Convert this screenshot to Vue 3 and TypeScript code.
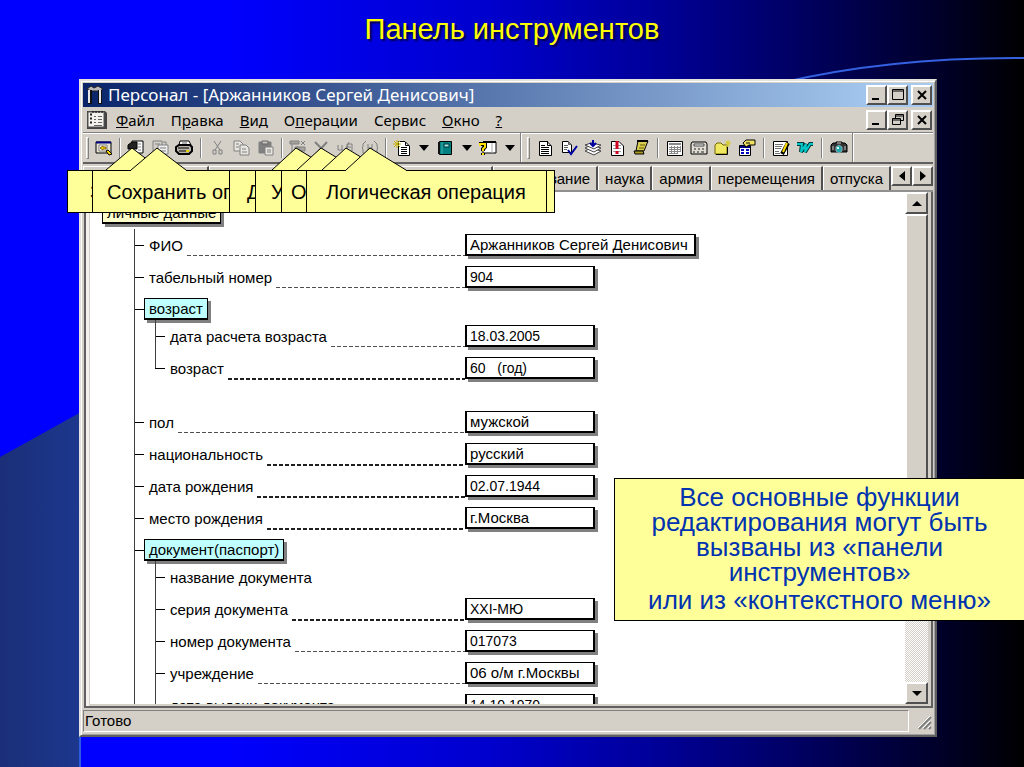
<script setup lang="ts">
import { ref } from 'vue'

interface Shape { d: string; f?: string; s?: string; w?: number }
interface Tool { icon?: string; kind?: 'sep' | 'wide' | 'drop' | 'grip'; label?: string }
interface Row { kind: 'field' | 'tag' | 'gap'; level?: number; label?: string; value?: string; bold?: boolean; long?: boolean; num?: boolean; last?: boolean; bare?: boolean }

const icons: Record<string, Shape[]> = {
  card: [
    { d: 'M1 3H16V14H1Z', f: '#e8e4d0', s: '#000' }, { d: 'M1 3.5H16', s: '#000080', w: 2 },
    { d: 'M4 6H12V12H4Z', f: '#fff', s: '#808080' }, { d: 'M5 9L8 7V8H11V10H8V11Z', f: '#ffe000', s: '#806000' },
    { d: 'M11 12L13 11L17 15L14 16Z', f: '#ffe000', s: '#000' },
  ],
  save: [
    { d: 'M5 2H16V14H5Z', f: '#fff', s: '#000' }, { d: 'M1 6L5 3H10V10H1Z', f: '#222', s: '#000' },
    { d: 'M10 5H14M10 8H14M11 11H14', s: '#808080' },
  ],
  saveDim: [
    { d: 'M2 2H11V12H2Z', f: '#d4d0c8', s: '#808080' }, { d: 'M7 6H17V15H7Z', f: '#eee', s: '#808080' },
    { d: 'M4 5H9M9 9H15M9 12H15M12 3L15 3L15 6', s: '#808080' },
  ],
  print: [
    { d: 'M5 2H14L16 6H4Z', f: '#fff', s: '#000' }, { d: 'M1 8L4 6H15L17 8V12L14 15H4L1 12Z', f: '#b8b4ac', s: '#000', w: 2 },
    { d: 'M3 9H14M4 12H12', s: '#000' }, { d: 'M11 12H14', s: '#e0d000', w: 2 }, { d: 'M7 4H12', s: '#666' },
  ],
  cut: [
    { d: 'M5 2L11 11M12 2L6 11', s: '#808080' },
    { d: 'M4 11H7V15H4ZM10 11H13V15H10Z', s: '#808080' },
  ],
  copy: [
    { d: 'M1 2H7L10 5V12H1Z', f: '#e8e6e0', s: '#808080' }, { d: 'M7 6H13L16 9V16H7Z', f: '#e8e6e0', s: '#808080' },
    { d: 'M3 5H6M3 8H6M9 10H13M9 13H14', s: '#808080' },
  ],
  paste: [
    { d: 'M2 3H14V14H2Z', f: '#808080', s: '#808080' }, { d: 'M5 2H11V5H5Z', f: '#c8c4bc', s: '#666' },
    { d: 'M8 8H16V16H8Z', f: '#e8e6e0', s: '#808080' }, { d: 'M10 11H14M10 13H14', s: '#808080' },
  ],
  addDim: [
    { d: 'M1 2H10V5H1ZM6 8H16V12H6Z', f: '#a8a49c', s: '#808080' }, { d: 'M3 5V14H9M12 2L16 6M16 2L12 6M8 7L13 13', s: '#808080' },
  ],
  delDim: [{ d: 'M2 3L14 15M14 3L3 15', s: '#808080', w: 2 }],
  editDim: [
    { d: 'M1 6V11H5V6M5 11H6M10 12V5H15V12M10 8H14M7 15L12 3', s: '#808080' },
  ],
  logicDim: [
    { d: 'M5 2L2 5V8L1 9L2 10V14L5 16M13 2L16 5V8L17 9L16 10V14L13 16M7 5V13M11 5V13M7 9H11', s: '#808080' },
  ],
  newdoc: [
    { d: 'M5.5 2.5H12L16.5 7V16.5H5.5Z', f: '#fff', s: '#000' }, { d: 'M12.5 3V6.5H16M8 8.5H14M8 10.5H14M8 12.5H14M8 14.5H14', s: '#000' },
    { d: 'M4 1V9M0 5H8M1 2L7 8M7 2L1 8', s: '#c8b400' },
  ],
  book: [{ d: 'M3.5 2.5H15.5V15.5H3.5Z', f: '#008080', s: '#000' }, { d: 'M3 3V15', s: '#111', w: 2 }, { d: 'M6 3V15', s: '#40b0b0' }, { d: 'M8 5H13V8H8Z', f: '#9fe0e0', s: '#003838' }],
  help: [
    { d: 'M4 3H17V14H4Z', f: '#fff', s: '#000' }, { d: 'M4 3H17', s: '#000', w: 2 }, { d: 'M13 4V14', s: '#aaa' },
    { d: 'M1 7V5H6V8L4 10V12M4 14V16', s: '#000', w: 4 }, { d: 'M1 7V5H6V8L4 10V12M4 14V16', s: '#ffe000', w: 2 },
  ],
  doc: [
    { d: 'M3.5 2.5H11L15.5 7V16.5H3.5Z', f: '#fff', s: '#000' }, { d: 'M11.5 2V6.5H15M5 6.5H9M5 8.5H13M5 10.5H13M5 12.5H13M5 14.5H13', s: '#000' },
  ],
  check: [
    { d: 'M2.5 2.5H8L11.5 6V13.5H2.5Z', f: '#fff', s: '#000' }, { d: 'M8.5 2V5.5H11M4 6.5H8M4 8.5H8M4 10.5H7', s: '#606060' },
    { d: 'M8 11L11 15L17 7', s: '#0000a0', w: 2 },
  ],
  stack: [
    { d: 'M1 12L7 9L17 12L10 16Z', f: '#fff', s: '#444' }, { d: 'M1 9L7 6L17 9L10 13Z', f: '#fff', s: '#444' },
    { d: 'M1 6L7 4L17 6L10 10Z', f: '#fff', s: '#444' }, { d: 'M9 1V6M6 4L9 7L12 4', s: '#0000a0', w: 2 },
  ],
  alert: [
    { d: 'M3.5 2.5H11L15.5 7V16.5H3.5Z', f: '#fff', s: '#000' }, { d: 'M5 6.5H13M5 9.5H13M5 12.5H13', s: '#999' },
    { d: 'M9 2V10M9 12V15', s: '#d00020', w: 3 },
  ],
  scroll: [
    { d: 'M6 2H16L12 12H4Z', f: '#d8cc50', s: '#000' }, { d: 'M2 12H11L12 15H3Z', f: '#a89820', s: '#000' },
    { d: 'M8 6H13M7 9H12', s: '#605800' }, { d: 'M5 2H16', s: '#000', w: 2 },
  ],
  grid: [
    { d: 'M1.5 2.5H16.5V16.5H1.5Z', f: '#fff', s: '#000' }, { d: 'M3 4H15V6H3Z', f: '#888' },
    { d: 'M3 8.5H15M3 10.5H15M3 12.5H15M3 14.5H12M5.5 7V15M8.5 7V15M11.5 7V15M14.5 7V13', s: '#888' },
  ],
  calc: [
    { d: 'M2 3H16L17 5V15H1V5Z', f: '#e0dcd4', s: '#000' }, { d: 'M4 5H14V7H4Z', f: '#fff', s: '#444' },
    { d: 'M4 10H6M8 10H10M12 10H14M3 13H5M7 13H9M11 13H14', s: '#222' },
  ],
  folder: [
    { d: 'M1 6L3 4H7L9 6H13V15H1Z', f: '#f0e860', s: '#706800' }, { d: 'M2 15.5H13.5V8', s: '#000' },
    { d: 'M14 1V8M11 4H17M12 2L16 7M16 2L12 7', s: '#d8cc20' },
  ],
  props: [
    { d: 'M1.5 6.5H12.5V16.5H1.5Z', f: '#fff', s: '#000' }, { d: 'M2 8H12', s: '#000080', w: 2 }, { d: 'M3 11H6M8 11H11M3 14H6M8 14H11', s: '#0000c0', w: 2 },
    { d: 'M5 4L8 1H17V6H11L8 8Z', f: '#f0e060', s: '#000' }, { d: 'M8 4H12', s: '#000' },
  ],
  note: [
    { d: 'M1.5 2.5H15.5V16.5H1.5Z', f: '#fff', s: '#000' }, { d: 'M3 5.5H11M3 7.5H10M3 9.5H9M3 12.5H7M3 14.5H8', s: '#707070' },
    { d: 'M16 4L10 15', s: '#000', w: 4 }, { d: 'M15 4L11 13', s: '#ffe000', w: 2 },
  ],
  word: [
    { d: 'M1 5H6L5 13L10 5L9 13L14 5H17', s: '#003838', w: 4 }, { d: 'M1 5H6L5 13L10 5L9 13L14 5H17', s: '#00c8c8', w: 2 },
  ],
  camera: [
    { d: 'M1 6L3 4H6V3H12V4H15L17 6V13H1Z', f: '#333', s: '#000' }, { d: 'M3 7V11M15 7V11M7 4H11', s: '#ccc' },
    { d: 'M9 6L12 8V12L9 14L6 12V8Z', f: '#20a8a8', s: '#8ab' }, { d: 'M7 9H9', s: '#d0ffff', w: 2 },
  ],
}

const t = (icon: string, label: string): Tool => ({ icon, label })
const sep: Tool = { kind: 'sep' }
const wide: Tool = { kind: 'wide' }
const drop: Tool = { kind: 'drop', label: 'Список' }
const tools: Tool[] = [
  { kind: 'grip' }, t('card', 'Карточка'), sep, t('save', 'Сохранить'), t('saveDim', 'Сохранить операцию'), t('print', 'Печать'), wide,
  t('cut', 'Вырезать'), t('copy', 'Копировать'), t('paste', 'Вставить'), sep,
  t('addDim', 'Добавить'), t('delDim', 'Удалить'), t('editDim', 'Операция'), t('logicDim', 'Логическая операция'), sep,
  t('newdoc', 'Новый документ'), drop, t('book', 'Справочник'), drop, t('help', 'Справка'), drop,
]
const tools2: Tool[] = [
  { kind: 'grip' }, t('doc', 'Документ'), t('check', 'Проверка'), t('stack', 'Загрузка'), t('alert', 'Внимание'), t('scroll', 'Приказ'), wide,
  t('grid', 'Таблица'), t('calc', 'Калькулятор'), t('folder', 'Папка'), t('props', 'Свойства'), wide,
  t('note', 'Заметка'), t('word', 'Word'), wide, t('camera', 'Снимок'),
]

const menu: [string, string, string][] = [['', 'Ф', 'айл'], ['П', 'р', 'авка'], ['', 'В', 'ид'], ['О', 'п', 'ерации'], ['Сервис', '', ''], ['', 'О', 'кно'], ['', '?', '']]
const tabs = ['образование', 'наука', 'армия', 'перемещения', 'отпуска']

const rows = ref<Row[]>([
  { kind: 'field', label: 'ФИО', value: 'Аржанников Сергей Денисович', long: true },
  { kind: 'field', label: 'табельный номер', value: '904', num: true },
  { kind: 'tag', label: 'возраст' },
  { kind: 'field', level: 1, label: 'дата расчета возраста', value: '18.03.2005', num: true },
  { kind: 'field', level: 1, label: 'возраст', value: '60   (год)', num: true, bold: true, last: true },
  { kind: 'gap' },
  { kind: 'field', label: 'пол', value: 'мужской' },
  { kind: 'field', label: 'национальность', value: 'русский', bold: true },
  { kind: 'field', label: 'дата рождения', value: '02.07.1944', num: true, bold: true },
  { kind: 'field', label: 'место рождения', value: 'г.Москва', bold: true },
  { kind: 'tag', label: 'документ(паспорт)' },
  { kind: 'field', level: 1, label: 'название документа', bare: true },
  { kind: 'field', level: 1, label: 'серия документа', value: 'XXI-МЮ', num: true, bold: true },
  { kind: 'field', level: 1, label: 'номер документа', value: '017073', num: true },
  { kind: 'field', level: 1, label: 'учреждение', value: '06 о/м г.Москвы' },
  { kind: 'field', level: 1, label: 'дата выдачи документа', value: '14.10.1970', num: true },
])

const callouts = [
  { id: 'c1', text: 'З', wing: 'left' },
  { id: 'c2', text: 'Сохранить оп', wing: 'left' },
  { id: 'c3', text: 'Д', wing: 'right' },
  { id: 'c4', text: 'У', wing: 'right' },
  { id: 'c5', text: 'О', wing: 'right' },
  { id: 'c6', text: 'Логическая операция', wing: 'right' },
]
</script>

<template>
  <main class="stage">
    <svg class="backdrop" viewBox="0 0 1024 767" preserveAspectRatio="none" aria-hidden="true">
      <defs>
        <linearGradient id="disc" gradientUnits="userSpaceOnUse" x1="0" y1="0" x2="90" y2="0">
          <stop offset="0" stop-color="#1b2f78" /><stop offset="1" stop-color="#1c3890" />
        </linearGradient>
      </defs>
      <path d="M0 457Q40 435 90 407V640Q80 700 80 767H0Z" fill="url(#disc)" />
      <path d="M80 737V767" stroke="#2a5ce0" stroke-width="2" />
      <path d="M780 83Q890 57 1024 58" fill="none" stroke="#3560e0" stroke-width="2" />
    </svg>

    <h1 class="heading">Панель инструментов</h1>

    <section class="window">
      <header class="titlebar">
        <svg width="18" height="20" viewBox="0 0 18 20" aria-hidden="true">
          <path d="M1 4L5 1L8 3L12 1L17 4L14 6H5Z" fill="#bbb" stroke="#222" />
          <path d="M4 5V19M14 5V19" stroke="#111" stroke-width="4" />
          <path d="M3 5V18M14 5V18" stroke="#e8e8e8" stroke-width="2" />
        </svg>
        <span class="caption">Персонал - [Аржанников Сергей Денисович]</span>
        <span class="sysgroup">
          <button class="sys" aria-label="Свернуть"><svg width="12" height="12"><path d="M1 10H8" stroke="#000" stroke-width="2" /></svg></button>
          <button class="sys" aria-label="Развернуть"><svg width="12" height="12"><path d="M.5 .5H11.5V10.5H.5ZM1 2H11" fill="none" stroke="#000" /></svg></button>
          <button class="sys close" aria-label="Закрыть"><svg width="12" height="12"><path d="M2 2L10 10M10 2L2 10" stroke="#000" stroke-width="2" /></svg></button>
        </span>
      </header>

      <nav class="menubar">
        <svg width="22" height="20" viewBox="0 0 22 20" aria-hidden="true">
          <path d="M1 1H19L21 3V19H1Z" fill="#444" />
          <path d="M2 2H18V17H2Z" fill="#f4f2ec" stroke="#555" />
          <path d="M4 4.5H6M4 8.5H6M4 12.5H6" stroke="#222" stroke-width="2" />
          <path d="M8 6.5H10M12 6.5H16M8 9.5H10M12 9.5H16M8 12.5H10M12 12.5H16M8 15.5H16" stroke="#666" />
          <path d="M7 1V3M10 1V3M13 1V3M16 1V3" stroke="#000" />
        </svg>
        <button v-for="m in menu" :key="m.join('')" class="menuitem">{{ m[0] }}<u>{{ m[1] }}</u>{{ m[2] }}</button>
        <span class="sysgroup">
          <button class="sys" aria-label="Свернуть документ"><svg width="12" height="12"><path d="M1 10H8" stroke="#000" stroke-width="2" /></svg></button>
          <button class="sys" aria-label="Восстановить"><svg width="12" height="12"><path d="M3.5 .5H11.5V6.5H3.5ZM4 2H11" fill="none" stroke="#000" /><path d="M.5 4.5H8.5V10.5H.5ZM1 6H8" fill="#d4d0c8" stroke="#000" /></svg></button>
          <button class="sys close" aria-label="Закрыть документ"><svg width="12" height="12"><path d="M2 2L10 10M10 2L2 10" stroke="#000" stroke-width="2" /></svg></button>
        </span>
      </nav>

      <div class="toolbars">
        <div v-for="(bar, b) in [tools, tools2]" :key="b" class="toolbar" role="toolbar">
          <template v-for="(x, i) in bar" :key="i">
            <button v-if="x.icon" class="tool" :aria-label="x.label">
              <svg width="18" height="18" viewBox="0 0 18 18"><path v-for="(p, k) in icons[x.icon]" :key="k" :d="p.d" :fill="p.f ?? 'none'" :stroke="p.s ?? 'none'" :stroke-width="p.w ?? 1" /></svg>
            </button>
            <button v-else-if="x.kind === 'drop'" class="drop" :aria-label="x.label"><svg width="10" height="6"><path d="M0 0H10L5 6Z" /></svg></button>
            <span v-else :class="x.kind"></span>
          </template>
        </div>
      </div>

      <div class="tabstrip">
        <span class="blank short"></span><span class="blank"></span>
        <button v-for="tab in tabs" :key="tab" class="tab">{{ tab }}</button>
        <span class="tabnav">
          <button class="arrow" aria-label="Назад"><svg width="6" height="10"><path d="M6 0V10L0 5Z" /></svg></button>
          <button class="arrow" aria-label="Вперёд"><svg width="6" height="10"><path d="M0 0V10L6 5Z" /></svg></button>
        </span>
      </div>

      <div class="client">
        <div class="page">
          <div class="roottag"><span class="box cream">личные данные</span></div>
          <div class="tree">
            <template v-for="(r, i) in rows" :key="i">
              <div v-if="r.kind === 'gap'" class="gap"></div>
              <div v-else-if="r.kind === 'tag'" class="tagrow"><span class="tick"></span><span class="box cyan">{{ r.label }}</span></div>
              <div v-else class="row" :class="{ sub: r.level, last: r.last }">
                <span class="tick"></span>
                <label :for="'f' + i">{{ r.label }}</label>
                <span v-if="!r.bare" class="dots" :class="{ bold: r.bold }"></span>
                <input v-if="!r.bare" :id="'f' + i" v-model="r.value" type="text" :class="{ long: r.long, num: r.num }" />
              </div>
            </template>
          </div>
        </div>
        <div class="scroll">
          <button class="arrow" aria-label="Вверх"><svg width="10" height="5"><path d="M5 0L10 5H0Z" /></svg></button>
          <div class="thumb"></div>
          <div class="track"></div>
          <button class="arrow" aria-label="Вниз"><svg width="10" height="5"><path d="M0 0H10L5 5Z" /></svg></button>
        </div>
      </div>

      <footer class="status">
        <span class="panel">Готово</span>
        <svg width="16" height="20" viewBox="0 0 16 20" aria-hidden="true">
          <path d="M2 18L14 6M7 18L14 11M12 18L14 16" stroke="#808080" stroke-width="2" />
          <path d="M1 17L13 5M6 17L13 10M11 17L13 15" stroke="#fff" />
        </svg>
      </footer>
    </section>

    <div v-for="c in callouts" :key="c.id" class="callout" :class="[c.id, c.wing]">
      <svg width="64" height="24" viewBox="0 0 64 24" aria-hidden="true">
        <path :d="c.wing === 'left' ? 'M0 24V23L26 1L55 23V24Z' : 'M0 24V23L24 1L60 23V24Z'" fill="#ffff99" />
        <path :d="c.wing === 'left' ? 'M0 23L26 1L55 23' : 'M0 23L24 1L60 23'" fill="none" stroke="#000" />
      </svg>
      {{ c.text }}
    </div>

    <aside class="note">
      <p>Все основные функции редактирования могут быть вызваны из «панели инструментов»</p>
      <p class="second">или из «контекстного меню»</p>
    </aside>
  </main>
</template>

<style>
body { margin: 0; }
</style>

<style scoped>
* { box-sizing: border-box; }
.stage {
  position: relative;
  display: flex;
  flex-direction: column;
  height: 100vh;
  min-height: 500px;
  padding: 0 87px 30px 79px;
  overflow: hidden;
  font-family: "Liberation Sans", Arial, sans-serif;
  background: linear-gradient(90deg, #0000ff 0, #0000fe 22%, #0000cc 48%, #00009c 63%, #00006a 76%, #000028 92%, #000 100%);
}
.backdrop { position: absolute; inset: 0; width: 100%; height: 100%; }
.heading {
  margin: 0 -87px 0 -79px;
  height: 79px;
  line-height: 58px;
  text-align: center;
  font-size: 29px;
  font-weight: 400;
  color: #ffff00;
  text-shadow: 2px 2px 2px #000040;
  position: relative;
}
button { font: inherit; color: #000; padding: 0; margin: 0; border: 0; background: none; display: flex; align-items: center; justify-content: center; flex: none; }
svg { flex: none; }
.window {
  position: relative;
  flex: 1;
  min-height: 0;
  display: flex;
  flex-direction: column;
  padding: 2px;
  background: #d4d0c8;
  border: 2px solid;
  border-color: #e4e2dc #606060 #606060 #e4e2dc;
  box-shadow: inset 1px 1px 0 #fff, inset -1px -1px 0 #a0a0a0;
}
.titlebar {
  display: flex;
  align-items: center;
  height: 24px;
  flex: none;
  padding: 0 1px 0 3px;
  gap: 4px;
  background: linear-gradient(90deg, #0a246a, #a6caf0 95%);
}
.caption { flex: 1; color: #fff; font-family: "Noto Sans", Tahoma, sans-serif; font-size: 17px; line-height: 24px; white-space: nowrap; }
.sysgroup { display: flex; margin-left: auto; }
.sys, .arrow {
  width: 21px;
  height: 20px;
  background: #d4d0c8;
  border: 2px solid;
  border-color: #fff #505050 #505050 #fff;
}
.sys.close { margin-left: 3px; }
.menubar { display: flex; align-items: center; height: 25px; flex: none; padding: 0 1px 0 3px; }
.menuitem { font-family: "Noto Sans", Tahoma, sans-serif; font-size: 15px; height: 22px; margin-left: 8px; margin-right: 8px; white-space: pre; }
.toolbars {
  display: flex;
  height: 32px;
  flex: none;
  border-top: 1px solid #808080;
  border-bottom: 2px solid #606060;
  box-shadow: inset 0 1px 0 #fff;
}
.toolbar { display: flex; align-items: center; padding: 0 2px 0 3px; border-right: 1px solid #fff; box-shadow: inset -1px 0 0 #808080; }
.toolbar + .toolbar { padding-left: 5px; }
.tool { width: 24px; height: 24px; }
.drop { width: 19px; height: 24px; }
.grip { width: 3px; height: 22px; margin-right: 3px; border: 1px solid; border-color: #fff #808080 #808080 #fff; }
.sep, .wide { width: 2px; height: 20px; margin: 0 3px; border-left: 1px solid #808080; border-right: 1px solid #fff; flex: none; }
.wide { margin: 0 4px; }
.tabstrip { display: flex; height: 28px; flex: none; padding: 2px 0 0; border-bottom: 2px solid #909090; }
.tab, .blank {
  height: 24px;
  padding: 0 6px;
  font-size: 15px;
  border-right: 2px solid #505050;
  border-left: 1px solid #fff;
  border-top: 1px solid #fff;
}
.blank { flex: 1; min-width: 0; }
.blank.short { flex: 0 1 126px; }
.tabnav { display: flex; height: 21px; }
.client {
  display: flex;
  flex: 1;
  min-height: 0;
  margin-left: 1px;
  padding: 0 3px 2px 4px;
  border: 2px solid;
  border-top: 0;
  border-color: #606060;
  box-shadow: inset 3px 0 0 #f4f2ee;
}
.page { flex: 1; min-width: 0; background: #fff; overflow: hidden; padding-left: 12px; }
.roottag { height: 37px; padding-top: 10px; }
.box { display: inline-block; height: 22px; padding: 0 4px; line-height: 19px; font-size: 15px; border: 1px solid #000; border-bottom-width: 2px; box-shadow: 3px 3px 0 #808080; white-space: nowrap; }
.cream { background: #ffffcc; }
.cyan { background: #bfffff; }
.tree { margin-left: 32px; border-left: 1px solid #404040; font-size: 15px; }
.gap { height: 22px; }
.tagrow { height: 27px; display: flex; align-items: flex-start; padding-top: 5px; }
.tick { width: 9px; height: 1px; background: #000; flex: none; }
.sub .tick { width: 10px; }
.tagrow .tick { margin-top: 11px; }
.row { position: relative; display: flex; align-items: center; height: 32px; width: 330px; }
.row label { margin: 0 4px 0 5px; white-space: nowrap; }
.row.sub { margin-left: 20px; width: 310px; }
.row.sub::before { content: ""; position: absolute; left: 0; top: 0; width: 1px; height: 100%; background: #404040; }
.row.last::before { height: 50%; }
.dots { flex: 1; align-self: flex-end; height: 1px; margin-bottom: 5px; background: repeating-linear-gradient(90deg, #505050 0 4px, #fff 4px 6px); }
.dots.bold { height: 2px; margin-bottom: 4px; background: repeating-linear-gradient(90deg, #202020 0 4px, #fff 4px 6px); }
.row input {
  width: 130px;
  height: 22px;
  flex: none;
  margin-right: -130px;
  padding: 0 3px;
  font: 15px "Liberation Sans", Arial, sans-serif;
  color: #000;
  background: #fff;
  border: 1px solid #000;
  border-bottom-width: 2px;
  border-right-width: 2px;
  border-left-width: 2px;
  border-radius: 0;
  box-shadow: 3px 3px 0 #808080;
}
.row input.num { font-size: 14px; }
.row input.long { width: 231px; margin-right: -231px; }
.scroll { width: 23px; display: flex; flex-direction: column; flex: none; }
.scroll .arrow { width: 23px; height: 22px; }
.thumb { flex: 3; background: #d4d0c8; border: 2px solid; border-color: #fff #505050 #505050 #fff; }
.track { flex: 2; background: repeating-conic-gradient(#fff 0 25%, #d4d0c8 0 50%) 0 0 / 2px 2px; }
.status { display: flex; align-items: center; height: 24px; flex: none; margin-top: 1px; }
.panel { flex: 1; height: 22px; line-height: 20px; margin-right: 8px; padding-left: 1px; font-size: 15px; border: 1px solid; border-color: #808080 #fff #fff #808080; }
.callout {
  position: absolute;
  top: 170px;
  height: 43px;
  line-height: 43px;
  border: 1px solid #000;
  background: #ffff99;
  font-size: 20px;
  white-space: nowrap;
}
.callout svg { position: absolute; top: -24px; left: 38px; }
.c1 { left: 67px; width: 162px; padding-left: 22px; }
.c2 { left: 92px; width: 240px; padding-left: 14px; }
.c3 { left: 229px; width: 240px; padding-left: 17px; }
.c4 { left: 255px; width: 240px; padding-left: 15px; }
.c5 { left: 281px; width: 274px; padding-left: 9px; }
.c6 { left: 306px; width: 241px; padding-left: 19px; }
.c3 svg { left: 42px; }
.c4 svg { left: 41px; }
.c5 svg { left: 40px; }
.c6 svg { left: 39px; }
.note {
  position: absolute;
  top: 478px;
  right: 0;
  width: 410px;
  padding: 6px 26px 7px;
  border: 1px solid #000;
  border-right: 0;
  background: #ffff99;
  color: #0033b0;
  text-align: center;
  font-size: 26px;
  line-height: 25px;
}
.note p { margin: 0; }
.note .second { margin-top: 3px; }
</style>
